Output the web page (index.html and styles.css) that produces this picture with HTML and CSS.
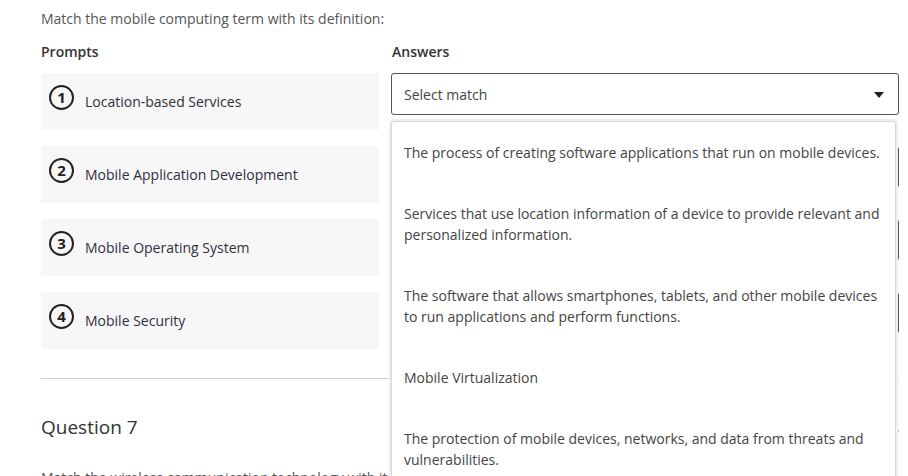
FILE: index.html
```html
<!DOCTYPE html>
<html lang="en">
<head>
<meta charset="utf-8">
<title>Question 6</title>
<link rel="stylesheet" href="styles.css">
</head>
<body>
<div class="page">
  <p class="instructions">Match the mobile computing term with its definition:</p>
  <div class="grid">
    <div class="col-head">Prompts</div>
    <div class="col-head answers-head">Answers</div>

    <div class="prompt"><span class="num">1</span><span class="ptext">Location-based Services</span></div>
    <div class="answer">
      <div class="select"><span>Select match</span><span class="caret"></span></div>
      <ul class="dropdown">
        <li>The process of creating software applications that run on mobile devices.</li>
        <li>Services that use location information of a device to provide relevant and personalized information.</li>
        <li>The software that allows smartphones, tablets, and other mobile devices to run applications and perform functions.</li>
        <li>Mobile Virtualization</li>
        <li>The protection of mobile devices, networks, and data from threats and vulnerabilities.</li>
      </ul>
    </div>

    <div class="prompt"><span class="num">2</span><span class="ptext">Mobile Application Development</span></div>
    <div class="answer"><div class="select"><span>Select match</span><span class="caret"></span></div></div>

    <div class="prompt"><span class="num">3</span><span class="ptext">Mobile Operating System</span></div>
    <div class="answer"><div class="select"><span>Select match</span><span class="caret"></span></div></div>

    <div class="prompt"><span class="num">4</span><span class="ptext">Mobile Security</span></div>
    <div class="answer"><div class="select"><span>Select match</span><span class="caret"></span></div></div>
  </div>
  <hr class="divider">
  <div class="q-head"><h2>Question 7</h2><span class="pts">1 pts</span></div>
  <p class="instructions next">Match the wireless communication technology with its description:</p>
</div>
</body>
</html>
```
FILE: styles.css
```css
html, body {
  margin: 0;
  padding: 0;
  background: #fff;
  overflow: hidden;
}
body {
  font-family: "Open Sans", "Liberation Sans", sans-serif;
  font-size: 14px;
  line-height: 21px;
  color: #333;
}
.page {
  padding: 8px 9px 0 41px;
}
.instructions {
  margin: 0;
  color: #555;
}
.grid {
  display: grid;
  grid-template-columns: 338px 1fr;
  column-gap: 12px;
  row-gap: 16px;
  margin-top: 12px;
}
.col-head {
  font-weight: 600;
  color: #333;
  margin-bottom: -5px;
}
.answers-head {
  padding-left: 1px;
}
.prompt {
  background: #f7f7f7;
  border-radius: 2px;
  display: flex;
  align-items: flex-start;
  padding: 12px 9px 17px 8px;
  height: 28px;
}
.num {
  box-sizing: border-box;
  width: 25px;
  height: 25px;
  border: 2px solid #222;
  border-radius: 50%;
  display: flex;
  align-items: center;
  justify-content: center;
  font-weight: 700;
  font-size: 15px;
  color: #222;
  flex: none;
}
.ptext {
  margin-top: 6px;
  margin-left: 11px;
  color: #2f2f3d;
}
.answer {
  position: relative;
}
.select {
  box-sizing: border-box;
  height: 42px;
  border: 1px solid #555;
  border-radius: 3px;
  display: flex;
  align-items: center;
  justify-content: space-between;
  padding: 0 14px 0 12px;
  color: #444;
  background: #fff;
}
.caret {
  width: 0;
  height: 0;
  border-left: 5px solid transparent;
  border-right: 5px solid transparent;
  border-top: 6px solid #222;
  margin-top: 2px;
}
.dropdown {
  position: absolute;
  top: 48px;
  left: 0;
  right: 3px;
  margin: 0;
  padding: 0;
  list-style: none;
  background: #fff;
  border: 1px solid #d6d6d6;
  border-radius: 3px;
  box-shadow: 0 0 0 2px #eeeeee;
  z-index: 10;
}
.dropdown li {
  padding: 20px 12px;
  color: #444;
}
.divider {
  border: 0;
  border-top: 1px solid #cfcfcf;
  margin: 29px 0 0;
}
.q-head {
  display: flex;
  justify-content: space-between;
  align-items: center;
  margin-top: 35px;
}
h2 {
  margin: 0;
  font-size: 19px;
  line-height: 26px;
  font-weight: 400;
  color: #333;
}
.pts {
  color: #555;
}
.next {
  margin-top: 27px;
}
```
